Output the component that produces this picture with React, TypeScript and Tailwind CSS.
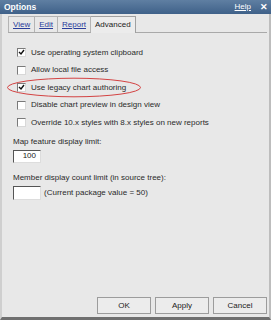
import React from "react";

const font = { fontFamily: '"Liberation Sans", Arial, sans-serif' };

function Check({ checked }: { checked: boolean }) {
  return (
    <div className="w-[9px] h-[9px] bg-white border-t border-l border-t-[#7a7a7a] border-l-[#7a7a7a] border-b border-r border-b-[#d8d8d8] border-r-[#d8d8d8] flex items-center justify-center shrink-0">
      {checked && (
        <svg width="7" height="7" viewBox="0 0 7 7">
          <path d="M1 3 L3 5 L6 1" stroke="#111" strokeWidth="1.4" fill="none" />
        </svg>
      )}
    </div>
  );
}

function Row({ checked, label }: { checked: boolean; label: string }) {
  return (
    <div className="flex items-center gap-[5px] h-[17.5px]">
      <Check checked={checked} />
      <span className="text-[8px] text-[#2a2a2a] leading-none">{label}</span>
    </div>
  );
}

export default function App() {
  return (
    <div className="w-[271px] h-[320px] bg-[#e8e8e8] flex flex-col overflow-hidden select-none" style={font}>
      <div className="h-[14px] bg-gradient-to-b from-[#5f7fa2] to-[#3f6189] flex items-center pl-[4px] pr-[3px] shrink-0">
        <span className="text-white font-bold text-[8.5px] leading-none">Options</span>
        <span className="ml-auto text-white text-[8px] underline leading-none">Help</span>
        <span className="ml-[9px] text-white font-bold text-[9px] leading-none">✕</span>
      </div>
      <div className="flex-1 flex flex-col border-l-2 border-l-[#cfcfcf] border-r-2 border-r-[#bdbdbd] border-b-[3px] border-b-[#6f6f6f]">
        <div className="flex items-end h-[19px] pl-[6px] pr-[2px] shrink-0">
          <div className="flex-1 flex items-end border-b border-b-[#a9a9a9] h-full">
            <div className="flex items-center h-[16px] border border-[#b4b4b4] border-b-0 px-[4px] text-[8px] text-[#2a3c9a] underline">View</div>
            <div className="flex items-center h-[16px] border border-[#b4b4b4] border-l-0 border-b-0 px-[4px] text-[8px] text-[#2a3c9a] underline">Edit</div>
            <div className="flex items-center h-[16px] border border-[#b4b4b4] border-l-0 border-b-0 px-[4px] text-[8px] text-[#2a3c9a] underline">Report</div>
            <div className="flex items-center h-[17px] -mb-px bg-[#ececec] border border-[#a0a0a0] border-l-0 border-b-0 px-[4px] text-[8px] text-[#222]">Advanced</div>
          </div>
        </div>
        <div className="flex-1 flex flex-col pl-[15px] pt-[11px] relative">
          <Row checked label="Use operating system clipboard" />
          <Row checked={false} label="Allow local file access" />
          <Row checked label="Use legacy chart authoring" />
          <Row checked={false} label="Disable chart preview in design view" />
          <Row checked={false} label="Override 10.x styles with 8.x styles on new reports" />
          <div className="-ml-[4px] mt-[6px] flex flex-col">
            <span className="text-[8px] text-[#2a2a2a] leading-none">Map feature display limit:</span>
            <div className="mt-[4px] w-[28px] h-[13px] bg-white border-t border-l border-t-[#555] border-l-[#555] border-b border-r border-b-[#ddd] border-r-[#ddd] flex items-center justify-end pr-[4px] text-[8px] text-[#222]">100</div>
            <span className="mt-[11px] text-[8px] text-[#2a2a2a] leading-none">Member display count limit (in source tree):</span>
            <div className="mt-[4px] flex items-center gap-[3px]">
              <div className="w-[28px] h-[14px] bg-white border-t border-l border-t-[#555] border-l-[#555] border-b border-r border-b-[#ddd] border-r-[#ddd]" />
              <span className="text-[8px] text-[#2a2a2a] leading-none">(Current package value = 50)</span>
            </div>
          </div>
          <svg className="absolute left-[4px] top-[44px]" width="136" height="21" viewBox="0 0 136 21">
            <ellipse cx="68" cy="10.5" rx="66.5" ry="9.3" fill="none" stroke="#d03030" strokeWidth="0.9" />
          </svg>
          <div className="mt-auto mb-[3px] flex justify-end gap-[4px] pr-[2px]">
            {["OK", "Apply", "Cancel"].map((b) => (
              <div key={b} className="w-[54px] h-[17px] border border-[#9c9c9c] bg-[#ececec] flex items-center justify-center text-[8px] text-[#222]">{b}</div>
            ))}
          </div>
        </div>
      </div>
    </div>
  );
}
